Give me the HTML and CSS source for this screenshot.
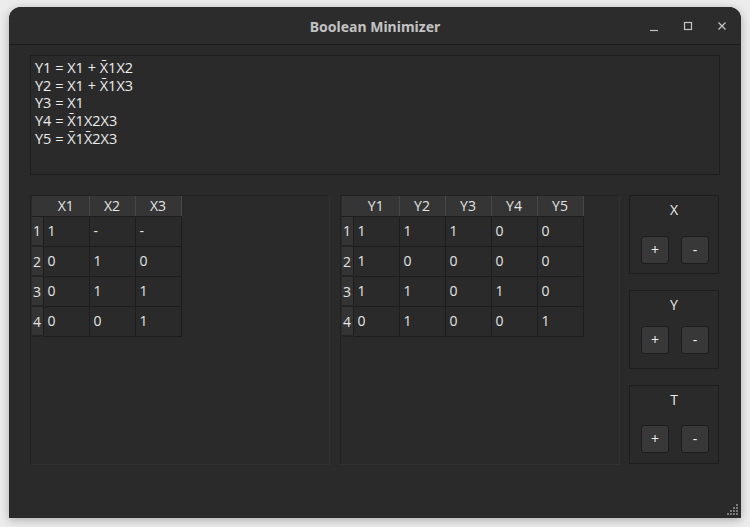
FILE: index.html
```html
<!DOCTYPE html>
<html>
<head>
<meta charset="utf-8">
<link rel="stylesheet" href="styles.css">
</head>
<body>
<div class="window">
  <div class="titlebar">
    <span class="title">Boolean Minimizer</span>
    <div class="wctl">
      <svg width="12" height="12" viewBox="0 0 12 12"><path d="M2 10.5h8" stroke="#c4c4c4" stroke-width="1.2"/></svg>
      <svg width="12" height="12" viewBox="0 0 12 12"><rect x="2.5" y="2.5" width="7" height="7" fill="none" stroke="#c4c4c4" stroke-width="1.2"/></svg>
      <svg width="12" height="12" viewBox="0 0 12 12"><path d="M2.5 2.5l7 7M9.5 2.5l-7 7" stroke="#c4c4c4" stroke-width="1.3"/></svg>
    </div>
  </div>
  <div class="content">
    <div class="output">
      <div>Y1 = X1 + X̄1X2</div>
      <div>Y2 = X1 + X̄1X3</div>
      <div>Y3 = X1</div>
      <div>Y4 = X̄1X2X3</div>
      <div>Y5 = X̄1X̄2X3</div>
    </div>
    <div class="lower">
      <div class="group g-left">
        <table class="grid">
          <tr><th class="corner"></th><th>X1</th><th>X2</th><th>X3</th></tr>
          <tr><th class="rh">1</th><td>1</td><td>-</td><td>-</td></tr>
          <tr><th class="rh">2</th><td>0</td><td>1</td><td>0</td></tr>
          <tr><th class="rh">3</th><td>0</td><td>1</td><td>1</td></tr>
          <tr><th class="rh">4</th><td>0</td><td>0</td><td>1</td></tr>
        </table>
      </div>
      <div class="group g-right">
        <table class="grid">
          <tr><th class="corner"></th><th>Y1</th><th>Y2</th><th>Y3</th><th>Y4</th><th>Y5</th></tr>
          <tr><th class="rh">1</th><td>1</td><td>1</td><td>1</td><td>0</td><td>0</td></tr>
          <tr><th class="rh">2</th><td>1</td><td>0</td><td>0</td><td>0</td><td>0</td></tr>
          <tr><th class="rh">3</th><td>1</td><td>1</td><td>0</td><td>1</td><td>0</td></tr>
          <tr><th class="rh">4</th><td>0</td><td>1</td><td>0</td><td>0</td><td>1</td></tr>
        </table>
      </div>
      <div class="ctlcol">
        <div class="ctlbox bx">
          <div class="lbl">X</div>
          <div class="btns"><button class="btn">+</button><button class="btn">-</button></div>
        </div>
        <div class="ctlbox by">
          <div class="lbl">Y</div>
          <div class="btns"><button class="btn">+</button><button class="btn">-</button></div>
        </div>
        <div class="ctlbox bt">
          <div class="lbl">T</div>
          <div class="btns"><button class="btn">+</button><button class="btn">-</button></div>
        </div>
      </div>
    </div>
  </div>
  <svg class="grip" width="12" height="12" viewBox="0 0 12 12" fill="#7a7a7a">
    <rect x="9" y="0" width="2" height="2"/>
    <rect x="6" y="3" width="2" height="2"/><rect x="9" y="3" width="2" height="2"/>
    <rect x="3" y="6" width="2" height="2"/><rect x="6" y="6" width="2" height="2"/><rect x="9" y="6" width="2" height="2"/>
    <rect x="0" y="9" width="2" height="2"/><rect x="3" y="9" width="2" height="2"/><rect x="6" y="9" width="2" height="2"/><rect x="9" y="9" width="2" height="2"/>
  </svg>
</div>
</body>
</html>
```
FILE: styles.css
```css
html, body { margin: 0; padding: 0; }
body {
  background: #ececec;
  width: 750px;
  height: 527px;
  padding: 7px 9px;
  box-sizing: border-box;
  font-family: "Open Sans", "Noto Sans", "DejaVu Sans", sans-serif;
  font-size: 14px;
  color: #e2e2e2;
  overflow: hidden;
}
.window {
  position: relative;
  width: 732px;
  height: 511px;
  background: #2a2a2a;
  border-radius: 12px 12px 0 0;
  box-shadow: 0 2px 10px rgba(0,0,0,0.28);
  display: flex;
  flex-direction: column;
}
.titlebar {
  position: relative;
  height: 37px;
  border-bottom: 1px solid #1b1b1b;
  background: #2c2c2c;
  border-radius: 12px 12px 0 0;
  display: flex;
  align-items: center;
  justify-content: center;
}
.title {
  font-family: "Noto Sans", "Open Sans", sans-serif;
  font-weight: bold;
  font-size: 14px;
  color: #c2c2c2;
  margin-top: 1px;
}
.wctl {
  position: absolute;
  right: 13px;
  top: 13px;
  display: flex;
  gap: 22px;
}
.wctl svg { display: block; }
.content {
  padding: 10px 21px 0 21px;
  display: flex;
  flex-direction: column;
  gap: 20px;
}
.output {
  height: 120px;
  box-sizing: border-box;
  border: 1px solid #1e1e1e;
  padding: 3px 4px;
  line-height: 17.7px;
  font-size: 14.5px;
  color: #ececec;
}
.lower {
  display: flex;
  height: 270px;
}
.group {
  box-sizing: border-box;
  height: 270px;
  border: 1px solid #222;
  border-right-color: #313131;
  border-bottom-color: #313131;
  padding: 0 1px;
}
.g-left { width: 300px; margin-right: 10px; }
.g-right { width: 280px; margin-right: 9px; }
.grid {
  border-collapse: collapse;
  font-size: 14px;
  color: #e4e4e4;
}
.grid th {
  background: #353535;
  font-weight: normal;
  height: 20px;
  padding: 0;
  width: 45px;
  text-align: center;
  border-right: 1px solid #464646;
  border-bottom: 1px solid #1d1d1d;
  box-sizing: border-box;
}
.grid th.corner {
  width: 11px;
  border-right: none;
}
.grid th.rh {
  width: 11px;
  height: 30px;
  text-align: left;
  padding-left: 1px;
  background: #343434;
  border-right: 1px solid #1d1d1d;
  border-bottom: 2px solid #242424;
}
.grid td {
  height: 30px;
  width: 46px;
  box-sizing: border-box;
  padding: 0 0 2px 4px;
  background: #2a2a2a;
  border-right: 1px solid #1d1d1d;
  border-bottom: 1px solid #1d1d1d;
}
.ctlcol {
  width: 90px;
  display: flex;
  flex-direction: column;
  gap: 16px;
}
.ctlbox {
  box-sizing: border-box;
  height: 79px;
  border: 1px solid #1e1e1e;
  display: flex;
  flex-direction: column;
  align-items: center;
}
.lbl {
  margin-top: 4px;
  line-height: 19px;
  font-size: 14px;
  color: #ececec;
}
.btns {
  display: flex;
  gap: 12px;
  margin-left: 2px;
}
.bx .btns { margin-top: 17px; }
.by .btns { margin-top: 12px; }
.bt .btns { margin-top: 16px; }
.btn {
  width: 28px;
  height: 28px;
  padding: 0;
  box-sizing: border-box;
  background: #383838;
  border: 1px solid #1c1c1c;
  border-radius: 3px;
  color: #f0f0f0;
  font-family: "Open Sans", "Noto Sans", sans-serif;
  font-size: 14px;
  line-height: 24px;
}
.grip {
  position: absolute;
  right: 2px;
  bottom: 2px;
}
```
